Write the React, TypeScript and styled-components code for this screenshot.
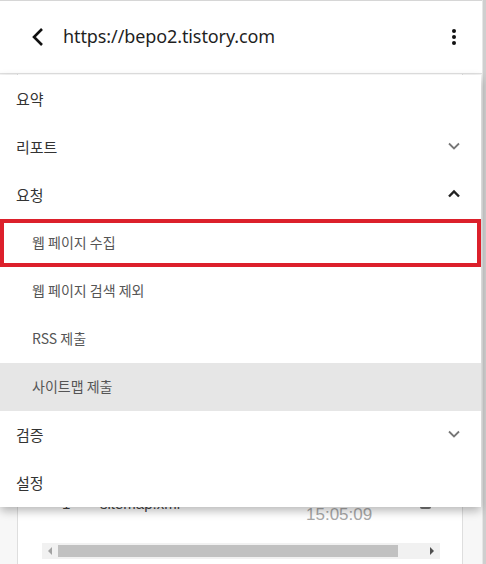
import styled, { createGlobalStyle } from "styled-components";

const Global = createGlobalStyle`
    html, body {
        margin: 0;
        padding: 0;
        background: #ffffff;
    }
    * {
        box-sizing: border-box;
    }
`;

const Screen = styled.div`
    width: 486px;
    height: 564px;
    overflow: hidden;
    display: flex;
    flex-direction: row;
    font-family: "Noto Sans", "Noto Sans CJK KR", sans-serif;
`;

const Main = styled.div`
    flex: 1;
    display: flex;
    flex-direction: column;
    position: relative;
    border-top: 1px solid #d6d6d6;
`;

const ScrollRail = styled.div`
    width: 4px;
    background: #cfcfcf;
    border-left: 1px solid #e6e6e6;
`;

const Header = styled.div`
    height: 73px;
    display: flex;
    flex-direction: row;
    align-items: center;
    padding: 0 25px 0 29px;
    gap: 18px;
    border-bottom: 1px solid #e2e2e2;
    background: #ffffff;
    svg {
        flex-shrink: 0;
    }
`;

const Url = styled.div`
    flex: 1;
    font-size: 18px;
    color: #1f1f1f;
    letter-spacing: -0.1px;
    padding-bottom: 2px;
`;

const Body = styled.div`
    flex: 1;
    position: relative;
    background: #f7f7f7;
    display: flex;
    flex-direction: row;
`;

const Card = styled.div`
    margin-left: 17px;
    width: 446px;
    background: #ffffff;
    border-left: 1px solid #dedede;
    border-right: 1px solid #dedede;
    display: flex;
    flex-direction: column;
    justify-content: flex-end;
    padding: 0 22px 5px 24px;
`;

const FileRow = styled.div`
    display: flex;
    flex-direction: row;
    align-items: flex-start;
    height: 48px;
    color: #444;
    font-family: "Liberation Sans", Arial, sans-serif;
    font-size: 15px;
    .num {
        width: 58px;
        padding-left: 20px;
    }
    .name {
        flex: 1;
    }
    .time {
        color: #a8a8a8;
        font-size: 17px;
        margin-top: 10px;
        width: 114px;
    }
    .sq {
        width: 11px;
        height: 11px;
        background: #777;
        border-radius: 2px;
        margin: 3px 9px 0 0;
    }
`;

const HScroll = styled.div`
    height: 16px;
    display: flex;
    flex-direction: row;
    align-items: stretch;
    background: #f1f1f1;
`;

const Arrow = styled.div<{ right?: boolean }>`
    width: 16px;
    display: flex;
    align-items: center;
    justify-content: center;
    &::after {
        content: "";
        border-top: 4px solid transparent;
        border-bottom: 4px solid transparent;
        ${p => p.right ? "border-left: 4px solid #505050;" : "border-right: 4px solid #a3a3a3;"}
    }
`;

const Thumb = styled.div`
    flex: 1;
    margin: 2px 26px 2px 0;
    background: #c1c1c1;
`;

const Menu = styled.div`
    position: absolute;
    top: 1px;
    left: 0;
    width: 481px;
    background: #ffffff;
    box-shadow: 0 4px 10px rgba(0, 0, 0, 0.28);
    border-radius: 0 0 4px 4px;
    display: flex;
    flex-direction: column;
    z-index: 2;
`;

const Item = styled.div<{ sub?: boolean; active?: boolean; marked?: boolean }>`
    height: 48px;
    display: flex;
    flex-direction: row;
    align-items: center;
    justify-content: space-between;
    padding: 0 20px 2px 16px;
    font-family: "Noto Sans CJK KR", "Noto Sans", sans-serif;
    font-size: ${p => p.sub ? "14px" : "15px"};
    color: ${p => p.sub ? "#555555" : "#333333"};
    background: ${p => p.active ? "#e6e6e6" : "#ffffff"};
    border: ${p => p.marked ? "4px solid #dc202b" : "none"};
    padding-left: ${p => p.marked ? "28px" : p.sub ? "32px" : "16px"};
`;

const Chevron = ({ up, dark }: { up?: boolean; dark?: boolean }) => (
    <svg width="14" height="10" viewBox="0 0 14 10">
        <path
            d={up ? "M2 7.5 L7 2.5 L12 7.5" : "M2 2.5 L7 7.5 L12 2.5"}
            fill="none"
            stroke={dark ? "#222" : "#777"}
            strokeWidth={dark ? 2.4 : 1.8}
        />
    </svg>
);

const menu: { label: string; sub?: boolean; chevron?: "up" | "down"; active?: boolean; marked?: boolean }[] = [
    { label: "요약" },
    { label: "리포트", chevron: "down" },
    { label: "요청", chevron: "up" },
    { label: "웹 페이지 수집", sub: true, marked: true },
    { label: "웹 페이지 검색 제외", sub: true },
    { label: "RSS 제출", sub: true },
    { label: "사이트맵 제출", sub: true, active: true },
    { label: "검증", chevron: "down" },
    { label: "설정" },
];

const App = () => {
    return (
        <Screen>
            <Global />
            <Main>
                <Header>
                    <svg width="16" height="22" viewBox="0 0 16 22">
                        <path d="M13 3 L5 11 L13 19" fill="none" stroke="#111" strokeWidth="2.6" />
                    </svg>
                    <Url>https://bepo2.tistory.com</Url>
                    <svg width="6" height="20" viewBox="0 0 6 20">
                        <circle cx="3" cy="4" r="2" fill="#111" />
                        <circle cx="3" cy="10" r="2" fill="#111" />
                        <circle cx="3" cy="16" r="2" fill="#111" />
                    </svg>
                </Header>
                <Body>
                    <Card>
                        <FileRow>
                            <span className="num">1</span>
                            <span className="name">sitemap.xml</span>
                            <span className="time">15:05:09</span>
                            <span className="sq" />
                        </FileRow>
                        <HScroll>
                            <Arrow />
                            <Thumb />
                            <Arrow right />
                        </HScroll>
                    </Card>
                    <Menu>
                        {menu.map(m => (
                            <Item key={m.label} sub={m.sub} active={m.active} marked={m.marked}>
                                <span>{m.label}</span>
                                {m.chevron && <Chevron up={m.chevron === "up"} dark={m.chevron === "up"} />}
                            </Item>
                        ))}
                    </Menu>
                </Body>
            </Main>
            <ScrollRail />
        </Screen>
    );
};

export default App;
